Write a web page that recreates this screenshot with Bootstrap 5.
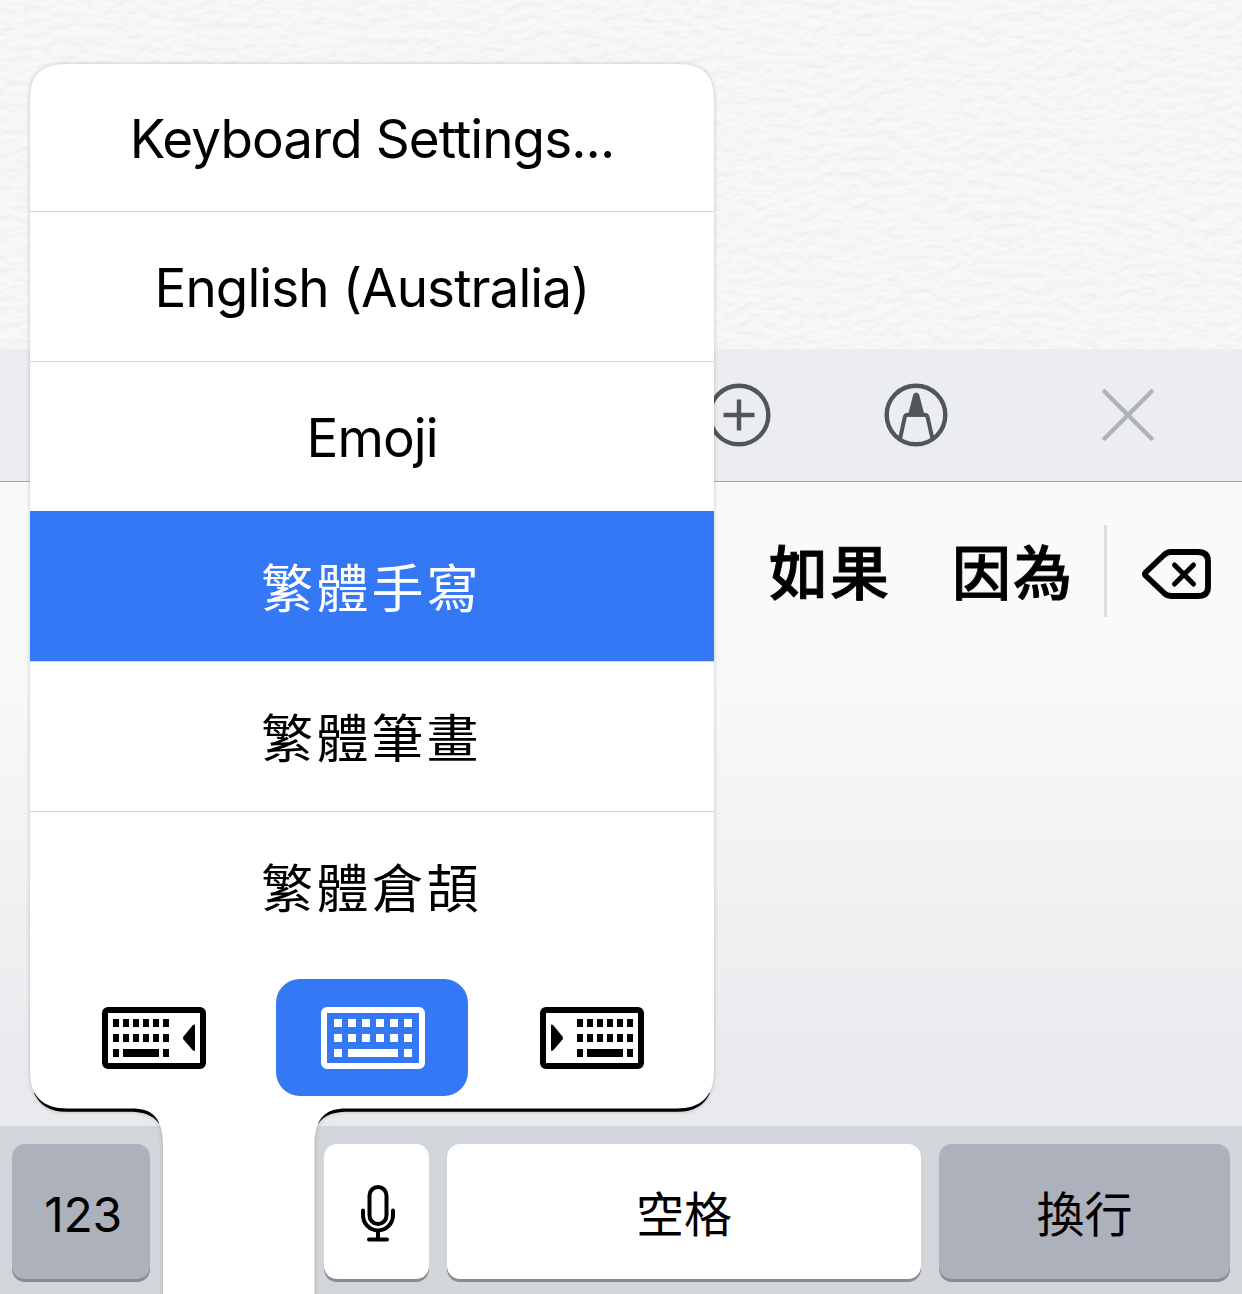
<!DOCTYPE html>
<html lang="zh-Hant">
<head>
<meta charset="utf-8">
<meta name="viewport" content="width=device-width, initial-scale=1">
<title>Keyboard</title>
<link href="https://cdn.jsdelivr.net/npm/bootstrap@5.3.0/dist/css/bootstrap.min.css" rel="stylesheet">
<style>
body{font-family:Inter,"Noto Sans CJK TC",sans-serif;color:#000;line-height:1;overflow:hidden}
svg{display:block;flex:none}
.screen{width:1242px;height:1294px}
.paper{height:349px;background:#f6f6f6}
.toolbar{height:133px;background:#ecedf1;border-bottom:1px solid #a5a7aa;padding:0 87px 1px 0;color:#50565c}
.tool-marker{margin-left:113px}
.tool-close{margin-left:153px}
.handwriting{background:linear-gradient(#f9fbfa 0,#f9fbfa 150px,#f4f5f6 300px,#e9eaed 600px,#e9eaed)}
.candidates{height:184px;padding-right:30px;font-size:59px;font-weight:500;font-family:"Noto Sans CJK TC",sans-serif}
.word{letter-spacing:2px;line-height:60px;margin-top:-9px;-webkit-text-stroke:.9px #000}
.word-next{margin-left:61px}
.rule{width:3px;height:92px;background:#dcdee1;margin:-6px 35px 0 30px}
.keys{height:168px;background:#d2d5da;padding:18px 12px 15px}
.keycap{height:135px;border:0;border-radius:13px;background:#fff;box-shadow:0 3px 0 #898b90;font-size:48px;color:#000;padding:6px 0 0;line-height:1}
.keycap-mic{padding:2px 0 0 2px}
.keycap-num{padding-left:4px;letter-spacing:-.3px}
.keycap-alt{background:#adb1bc}
.popover-menu{left:30px;top:64px;width:684px;height:1230px}
.bubble{left:0;top:0;overflow:visible;filter:drop-shadow(0 0 2px rgba(0,0,0,.22))}
.choices{--bs-list-group-bg:transparent;--bs-list-group-border-color:#d6d6d8;--bs-list-group-color:#000;border-radius:0;font-size:53px;letter-spacing:-.93px}
.choices .list-group-item{height:150px;padding:4px 0 0;border-width:0 0 1px;line-height:1}
.choices .list-group-item:first-child{height:148px;padding-top:3px}
.choices .list-group-item:nth-child(3){border-color:#3478f6}
.choices .list-group-item.active{background:#3478f6;border-color:#d6d6d8;color:#fff;margin:0;border-top:0}
.choices .list-group-item:last-child{border:0;height:149px}
.choices .list-group-item:nth-child(n+4){padding-top:0;padding-bottom:2px}
.zh{font-family:"Noto Sans CJK TC",sans-serif;font-size:52px;letter-spacing:3.1px;margin-left:-1px}
.docks{padding:18px 0 0 27px}
.dock{width:192px;height:117px;border-radius:24px;padding-left:2px}
.dock-on{background:#3478f6;color:#fff}
</style>
<script src="https://cdn.jsdelivr.net/npm/bootstrap@5.3.0/dist/js/bootstrap.bundle.min.js"></script>
</head>
<body>
<div class="screen position-relative d-flex flex-column overflow-hidden">
  <div class="paper">
    <svg width="1242" height="349">
      <filter id="grain" x="0" y="0" width="100%" height="100%" color-interpolation-filters="sRGB">
        <feTurbulence type="fractalNoise" baseFrequency=".07 .12" numOctaves="2" seed="8"/>
        <feDiffuseLighting surfaceScale="1" diffuseConstant="1.1" lighting-color="#fafafa"><feDistantLight azimuth="260" elevation="63"/></feDiffuseLighting>
      </filter>
      <rect width="1242" height="349" fill="#f7f7f7"/>
      <rect width="1242" height="349" filter="url(#grain)" opacity=".2"/>
    </svg>
  </div>

  <div class="toolbar d-flex align-items-center justify-content-end">
    <svg width="64" height="64" viewBox="0 0 64 64" fill="none" stroke="currentColor" stroke-width="4.4"><circle cx="32" cy="32" r="29.3"/><path d="M16.500 32h31M32 16.500v31"/></svg>
    <svg class="tool-marker" width="64" height="64" viewBox="0 0 64 64" fill="none" stroke="currentColor" stroke-width="4.4"><circle cx="32" cy="32" r="29.3"/><path d="M16 56L20.8 34Q21.4 31.7 24 31.7H40.500Q43 31.700 43.500 34L48.500 56" stroke-width="4"/><path d="M29.300 11.500Q32.200 7.500 35.100 11.500L41 33.800H23.500Z" fill="currentColor" stroke="none"/></svg>
    <svg class="tool-close" width="54" height="54" viewBox="0 0 54 54" fill="none" stroke="#afb2b6" stroke-width="4.5" stroke-linecap="round"><path d="M3.500 3.500l47 47M50.500 3.500l-47 47"/></svg>
  </div>

  <div class="handwriting flex-fill">
    <div class="candidates d-flex align-items-center justify-content-end">
      <span class="word">如果</span>
      <span class="word word-next">因為</span>
      <span class="rule"></span>
      <svg width="70" height="52" viewBox="0 0 70 52" fill="none" stroke="#000" stroke-linecap="round" stroke-linejoin="round"><path d="M4 24Q2 26 4 28L22 45Q25 48 29 48H56Q66 48 66 39V13Q66 4 56 4H29Q25 4 22 7Z" stroke-width="5.800"/><path d="M32.500 17l19 19M51.500 17L32.500 36" stroke-width="5"/></svg>
    </div>
  </div>

  <div class="keys d-flex">
    <button class="keycap keycap-alt keycap-num" style="width:138px">123</button>
    <button class="keycap keycap-mic d-flex align-items-center justify-content-center" style="width:105px;margin-left:174px">
      <svg width="38" height="60" viewBox="0 0 38 60" fill="none" stroke="#000" stroke-width="4" stroke-linecap="round"><rect x="10.500" y="4" width="17" height="37" rx="8.500"/><path d="M4 27.500V32a15 15.500 0 0 0 30 0v-4.500M19 48v8M10 56.500h18"/></svg>
    </button>
    <button class="keycap" style="width:474px;margin-left:18px">空格</button>
    <button class="keycap keycap-alt" style="width:291px;margin-left:18px">換行</button>
  </div>

  <div class="popover-menu position-absolute">
    <svg class="bubble position-absolute" width="684" height="1230" viewBox="0 0 684 1230">
      <defs><path id="shape" d="M36 0H648C674 0 684 12 684 36V1006C684 1032 672 1044.500 646 1044.500H316C296 1044.500 284.500 1053 284.500 1082V1240H133V1082C133 1053 122 1044.500 102 1044.500H38C12 1044.500 0 1032 0 1006V36C0 12 10 0 36 0Z"/></defs>
      <path d="M4 1029C10 1042 21 1047.800 36 1047.800H98C112 1047.800 122 1050 129.500 1060V1040H288V1060C295 1050 305 1047.800 320 1047.800H648C663 1047.800 674 1042 680 1029Z"/>
      <use href="#shape" fill="#fff"/>
    </svg>
    <div class="list-group choices position-relative text-center">
      <div class="list-group-item d-flex align-items-center justify-content-center"><span>Keyboard Settings...</span></div>
      <div class="list-group-item d-flex align-items-center justify-content-center"><span>English (Australia)</span></div>
      <div class="list-group-item d-flex align-items-center justify-content-center"><span>Emoji</span></div>
      <div class="list-group-item active d-flex align-items-center justify-content-center"><span class="zh">繁體手寫</span></div>
      <div class="list-group-item d-flex align-items-center justify-content-center"><span class="zh">繁體筆畫</span></div>
      <div class="list-group-item d-flex align-items-center justify-content-center"><span class="zh">繁體倉頡</span></div>
    </div>
    <div class="docks d-flex position-relative">
      <div class="dock d-flex align-items-center justify-content-center">
        <svg width="104" height="62"><rect x="3" y="3" width="98" height="56" rx="3" fill="none" stroke="#000" stroke-width="6"/><path d="M11 12h6v8h-6zm10 0h6v8h-6zm10 0h6v8h-6zm10 0h6v8h-6zm10 0h6v8h-6zm10 0h6v8h-6zM11 27h6v8h-6zm10 0h6v8h-6zm10 0h6v8h-6zm10 0h6v8h-6zm10 0h6v8h-6zm10 0h6v8h-6zM11 42h6v8h-6zm10 0h36v8H21zm40 0h6v8h-6z"/><path d="M81.500 29.500L90.500 18.500Q93 16.500 93 19V42.500Q93 45 90.500 43L81.500 32.500Q80.300 31 81.500 29.500Z"/></svg>
      </div>
      <div class="dock dock-on d-flex align-items-center justify-content-center" style="margin-left:27px">
        <svg width="104" height="62" fill="#fff"><rect x="3" y="3" width="98" height="56" rx="3" fill="none" stroke="#fff" stroke-width="6"/><path d="M13 12h8v8h-8zm14 0h8v8h-8zm14 0h8v8h-8zm14 0h8v8h-8zm14 0h8v8h-8zm14 0h8v8h-8zM13 27h8v8h-8zm14 0h8v8h-8zm14 0h8v8h-8zm14 0h8v8h-8zm14 0h8v8h-8zm14 0h8v8h-8zM13 42h8v8h-8zm14 0h50v8H27zm56 0h8v8h-8z"/></svg>
      </div>
      <div class="dock d-flex align-items-center justify-content-center" style="margin-left:27px">
        <svg width="104" height="62"><rect x="3" y="3" width="98" height="56" rx="3" fill="none" stroke="#000" stroke-width="6"/><path d="M37 12h6v8h-6zm10 0h6v8h-6zm10 0h6v8h-6zm10 0h6v8h-6zm10 0h6v8h-6zm10 0h6v8h-6zM37 27h6v8h-6zm10 0h6v8h-6zm10 0h6v8h-6zm10 0h6v8h-6zm10 0h6v8h-6zm10 0h6v8h-6zM37 42h6v8h-6zm10 0h36v8H47zm40 0h6v8h-6z"/><path d="M22.500 29.500L13.500 18.500Q11 16.500 11 19V42.500Q11 45 13.500 43L22.500 32.500Q23.700 31 22.500 29.500Z"/></svg>
      </div>
    </div>
  </div>
</div>
</body>
</html>
